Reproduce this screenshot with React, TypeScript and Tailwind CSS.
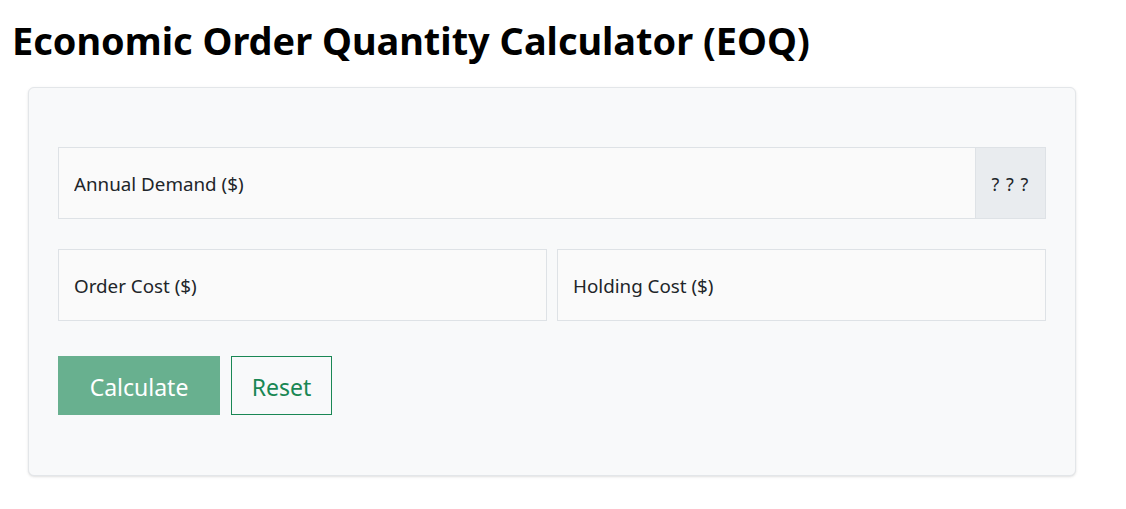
import React, { useState } from 'react';

const font = { fontFamily: '"Noto Sans", "Open Sans", sans-serif' };

const Field: React.FC<{ label: string; value: string; onChange: (v: string) => void }> = ({ label, value, onChange }) => (
  <input
    type="number"
    placeholder={label}
    value={value}
    onChange={(e) => onChange(e.target.value)}
    className="w-full h-[72px] px-[15px] pt-[2px] bg-[#fafafa] border border-[#dee2e6] text-[18.8px] text-[#212529] placeholder:text-[#212529] outline-none"
  />
);

export default function App() {
  const [demand, setDemand] = useState('');
  const [orderCost, setOrderCost] = useState('');
  const [holding, setHolding] = useState('');
  const ready = demand !== '' && orderCost !== '' && holding !== '';

  const reset = () => {
    setDemand('');
    setOrderCost('');
    setHolding('');
  };

  return (
    <div className="min-h-screen bg-white" style={font}>
      <h1 className="pl-[12px] pt-[14px] text-[37.9px] leading-[52px] font-bold text-black">
        Economic Order Quantity Calculator (EOQ)
      </h1>
      <div className="ml-[28px] mt-[21px] w-[1048px] bg-[#f8f9fa] border border-[#e3e6e9] rounded-md shadow-sm px-[29px] pt-[59px] pb-[60px]">
        <div className="flex">
          <div className="flex-1">
            <Field label="Annual Demand ($)" value={demand} onChange={setDemand} />
          </div>
          <span className="w-[70px] h-[72px] pt-[2px] flex items-center justify-center bg-[#e9ecef] border border-l-0 border-[#dee2e6] text-[18px] tracking-[1px] text-[#212529]">
            ?&nbsp;?&nbsp;?
          </span>
        </div>
        <div className="grid grid-cols-2 gap-[10px] mt-[30px]">
          <Field label="Order Cost ($)" value={orderCost} onChange={setOrderCost} />
          <Field label="Holding Cost ($)" value={holding} onChange={setHolding} />
        </div>
        <div className="flex gap-[11px] mt-[35px]">
          <button
            disabled={!ready}
            className="w-[162px] h-[59px] pt-[3px] bg-[#68b08f] text-white text-[23px]"
          >
            Calculate
          </button>
          <button
            onClick={reset}
            className="w-[101px] h-[59px] pt-[3px] border border-[#198754] text-[#198754] text-[23px]"
          >
            Reset
          </button>
        </div>
      </div>
    </div>
  );
}
